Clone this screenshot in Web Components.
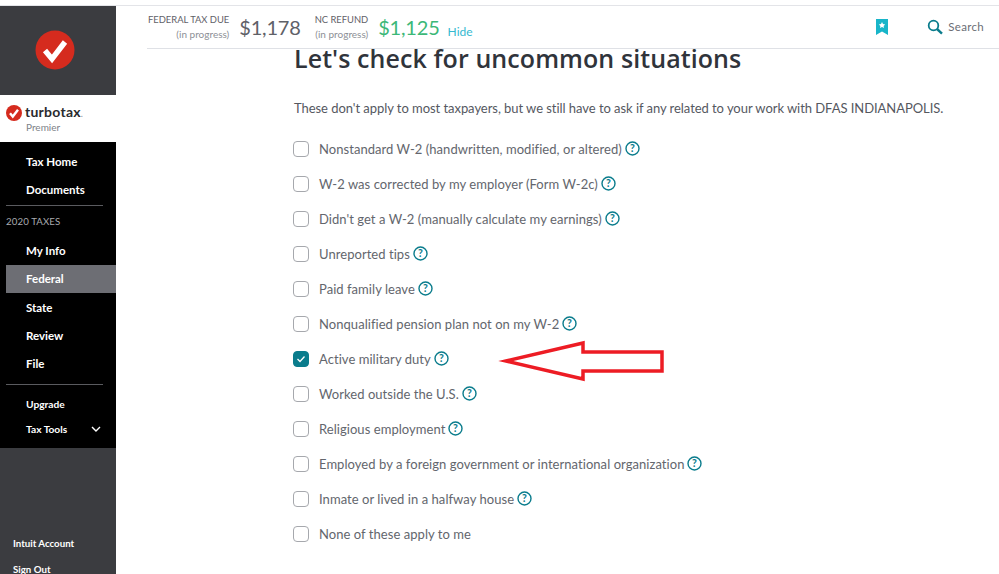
<!DOCTYPE html>
<html>
<head>
<meta charset="utf-8">
<title>TurboTax</title>
<style>
html, body { margin: 0; padding: 0; background: #fff; }
body { font-family: Lato, "Noto Sans", sans-serif; width: 999px; height: 574px; overflow: hidden; }
</style>
</head>
<body>
<tt-app></tt-app>
<script>
const helpIcon = `<svg width="15" height="15" viewBox="0 0 15 15"><circle cx="7.5" cy="7.5" r="6.5" fill="none" stroke="#0a7c8c" stroke-width="1.4"/><text x="7.5" y="11.2" text-anchor="middle" font-family="Lato, sans-serif" font-size="10.5" font-weight="700" fill="#0a7c8c">?</text></svg>`

class NavItem extends HTMLElement {
    constructor() {
        super()
        this.attachShadow({ mode: 'open' }).innerHTML = `
        <style>
        :host{
            display: flex;
            align-items: center;
            justify-content: space-between;
            height: 28.15px;
            margin-left: 6px;
            padding: 0 15px 0 20px;
            color: #fff;
            font-size: 11.5px;
            font-weight: 700;
            box-sizing: border-box;
        }
        :host([active]){
            background: #6d6e74;
        }
        :host([small]){
            font-size: 10.2px;
        }
        </style>
        <slot></slot><slot name="end"></slot>`
    }
}

class SideBar extends HTMLElement {
    constructor() {
        super()
        this.attachShadow({ mode: 'open' }).innerHTML = `
        <style>
        :host{
            display: flex;
            flex-direction: column;
            flex: none;
            width: 116px;
            height: 569px;
            background: #3b3c40;
        }
        .brand{
            height: 90px;
            display: flex;
            align-items: center;
            justify-content: center;
            flex: none;
            padding-right: 6px;
        }
        .logo{
            height: 47px;
            background: #fff;
            flex: none;
            box-sizing: border-box;
            padding: 9px 0 0 6px;
        }
        .logo-row{
            display: flex;
            align-items: center;
            gap: 3px;
            height: 17px;
        }
        .word{
            font: 700 14px/17px Lato, sans-serif;
            color: #2a2b2e;
            letter-spacing: .25px;
        }
        .word span{ color: #8d9096; font-size: 9px; font-weight: 400; letter-spacing: 0; }
        .plan{
            font: 400 10px/12px Lato, sans-serif;
            color: #7d8288;
            margin: 0 0 0 20px;
        }
        .menu{
            background: #000;
            height: 306px;
            flex: none;
            box-sizing: border-box;
            padding-top: 5px;
        }
        .rule{
            height: 1px;
            background: #5a5b5f;
            margin: 2px 13px 0 6px;
        }
        .year{
            font-size: 9.7px;
            color: #a9abb0;
            margin: 9px 0 9.5px 6px;
            line-height: 12px;
            letter-spacing: .1px;
        }
        .account{
            flex: 1;
            display: flex;
            flex-direction: column;
            padding: 89px 0 0 13px;
            color: #fff;
            font-size: 9.7px;
            font-weight: 700;
            line-height: 12px;
            gap: 14px;
        }
        .spaced{ margin-top: 4px; }
        </style>
        <div class="brand">
            <svg width="40" height="40" viewBox="0 0 40 40"><circle cx="20" cy="20" r="19.5" fill="#d52b1e"/><path d="M10 20.5l7 8.5L30 12" fill="none" stroke="#fff" stroke-width="5.4"/></svg>
        </div>
        <div class="logo">
            <div class="logo-row">
                <svg width="16" height="16" viewBox="0 0 40 40"><circle cx="20" cy="20" r="20" fill="#d52b1e"/><path d="M10 20.5l7 8.5L30 12" fill="none" stroke="#fff" stroke-width="6"/></svg>
                <div class="word">turbotax<span>.</span></div>
            </div>
            <div class="plan">Premier</div>
        </div>
        <div class="menu">
            <nav-item>Tax Home</nav-item>
            <nav-item>Documents</nav-item>
            <div class="rule"></div>
            <div class="year">2020 TAXES</div>
            <nav-item>My Info</nav-item>
            <nav-item active>Federal</nav-item>
            <nav-item>State</nav-item>
            <nav-item>Review</nav-item>
            <nav-item>File</nav-item>
            <div class="rule" style="margin-top:7px"></div>
            <div class="spaced">
                <nav-item small>Upgrade</nav-item>
                <nav-item small style="margin-top:-3px">Tax Tools
                    <svg slot="end" width="10" height="6" viewBox="0 0 10 6"><path d="M1 1l4 4 4-4" fill="none" stroke="#fff" stroke-width="1.4"/></svg>
                </nav-item>
            </div>
        </div>
        <div class="account">
            <div>Intuit Account</div>
            <div>Sign Out</div>
        </div>`
    }
}

class TaxFigure extends HTMLElement {
    constructor() {
        super()
        this.attachShadow({ mode: 'open' }).innerHTML = `
        <style>
        :host{
            display: flex;
            align-items: center;
            gap: 10px;
        }
        .label{
            text-align: right;
            font-size: 9.4px;
            line-height: 14px;
            color: #5f6168;
        }
        .label small{
            display: block;
            font-size: 10px;
            color: #8d9096;
        }
        .amount{
            font-size: 20px;
            letter-spacing: -.2px;
            color: var(--amount, #5f6168);
        }
        </style>
        <div class="label"><slot name="label"></slot><small>(in progress)</small></div>
        <div class="amount"><slot></slot></div>`
    }
}

class TopBar extends HTMLElement {
    constructor() {
        super()
        this.attachShadow({ mode: 'open' }).innerHTML = `
        <style>
        :host{
            display: flex;
            align-items: center;
            height: 43px;
            margin-left: 31px;
            border-bottom: 1px solid #dfe1e6;
            box-sizing: content-box;
            padding-left: 1px;
        }
        .refund{ margin-left: 14px; --amount: #3cb878; }
        .hide{
            font-size: 12px;
            color: #35b9d0;
            margin: 9px 0 0 8px;
        }
        .right{
            margin-left: auto;
            display: flex;
            align-items: center;
            padding-right: 15px;
        }
        .search{
            display: flex;
            align-items: center;
            gap: 5px;
            margin-left: 39px;
            font-size: 11.5px;
            letter-spacing: .3px;
            color: #6b6e75;
        }
        </style>
        <tax-figure><span slot="label">FEDERAL TAX DUE</span>$1,178</tax-figure>
        <tax-figure class="refund"><span slot="label">NC REFUND</span>$1,125</tax-figure>
        <span class="hide">Hide</span>
        <div class="right">
            <svg width="12" height="16" viewBox="0 0 12 16"><path d="M0 0h12v16l-6-3.4L0 16z" fill="#18b5c9"/><path d="M6 3l1 2.100 2.200.3-1.600 1.500.4 2.200L6 8l-2 1.100.4-2.200-1.600-1.500L5 5.100z" fill="#fff"/></svg>
            <div class="search">
                <svg width="16" height="16" viewBox="0 0 16 16"><circle cx="6.500" cy="6.500" r="4.800" fill="none" stroke="#0a7c8c" stroke-width="1.800"/><path d="M10 10l5 4.600" stroke="#0a7c8c" stroke-width="2.400" fill="none"/></svg>
                Search
            </div>
        </div>`
    }
}

class CheckRow extends HTMLElement {
    constructor() {
        super()
        const checked = this.hasAttribute('checked')
        const noHelp = this.hasAttribute('nohelp')
        this.attachShadow({ mode: 'open' }).innerHTML = `
        <style>
        :host{
            display: flex;
            align-items: center;
            height: 35.03px;
            font-size: 13px;
            letter-spacing: .05px;
            color: #63666d;
        }
        .box{
            width: 14px;
            height: 14px;
            flex: none;
            border: 1px solid #a6a8ad;
            border-radius: 4px;
            margin-right: 10px;
            display: flex;
            align-items: center;
            justify-content: center;
        }
        .box.on{
            background: #0a7c8c;
            border-color: #0a7c8c;
        }
        svg.help{ margin-left: 3px; flex: none; }
        </style>
        <div class="box ${checked ? 'on' : ''}">${checked ? '<svg width="10" height="8" viewBox="0 0 10 8"><path d="M1.500 4l2.500 2.500L8.500 1.500" fill="none" stroke="#fff" stroke-width="1.300"/></svg>' : ''}</div>
        <slot></slot>
        ${noHelp ? '' : helpIcon.replace('<svg', '<svg class="help"')}`
    }
}

class TtApp extends HTMLElement {
    constructor() {
        super()
        this.attachShadow({ mode: 'open' }).innerHTML = `
        <style>
        :host{
            display: flex;
            position: relative;
            width: 999px;
            height: 574px;
            box-sizing: border-box;
            border-top: 1px solid transparent;
            padding-top: 4px;
            overflow: hidden;
        }
        .stripe{
            position: absolute;
            left: 0; right: 0; top: 4px;
            height: 1px;
            background: #e3e4e8;
        }
        main{ flex: 1; min-width: 0; }
        .content{
            padding-left: 178px;
        }
        h1{
            margin: -9px 0 0;
            font: 600 25px/36px "Open Sans", sans-serif;
            color: #30343b;
            letter-spacing: .08px;
        }
        p{
            margin: 23px 0 14.2px;
            font-size: 13px;
            line-height: 18px;
            letter-spacing: -.05px;
            color: #55585f;
        }
        check-row{ margin-left: -1px; }
        .arrow{
            position: absolute;
            left: 495px;
            top: 332px;
        }
        </style>
        <div class="stripe"></div>
        <side-bar></side-bar>
        <main>
            <top-bar></top-bar>
            <div class="content">
                <h1>Let's check for uncommon situations</h1>
                <p>These don't apply to most taxpayers, but we still have to ask if any related to your work with DFAS INDIANAPOLIS.</p>
                <check-row>Nonstandard W-2 (handwritten, modified, or altered)</check-row>
                <check-row>W-2 was corrected by my employer (Form W-2c)</check-row>
                <check-row>Didn't get a W-2 (manually calculate my earnings)</check-row>
                <check-row>Unreported tips</check-row>
                <check-row>Paid family leave</check-row>
                <check-row>Nonqualified pension plan not on my W-2</check-row>
                <check-row checked>Active military duty</check-row>
                <check-row>Worked outside the U.S.</check-row>
                <check-row>Religious employment</check-row>
                <check-row>Employed by a foreign government or international organization</check-row>
                <check-row>Inmate or lived in a halfway house</check-row>
                <check-row nohelp>None of these apply to me</check-row>
            </div>
        </main>
        <svg class="arrow" width="176" height="56" viewBox="0 0 176 56"><path d="M11 28L88 10V19H167V38H88V46Z" fill="#fff" stroke="#ed1c24" stroke-width="3.5" stroke-miterlimit="10"/></svg>`
    }
}

customElements.define('nav-item', NavItem)
customElements.define('side-bar', SideBar)
customElements.define('tax-figure', TaxFigure)
customElements.define('top-bar', TopBar)
customElements.define('check-row', CheckRow)
customElements.define('tt-app', TtApp)
</script>
</body>
</html>
